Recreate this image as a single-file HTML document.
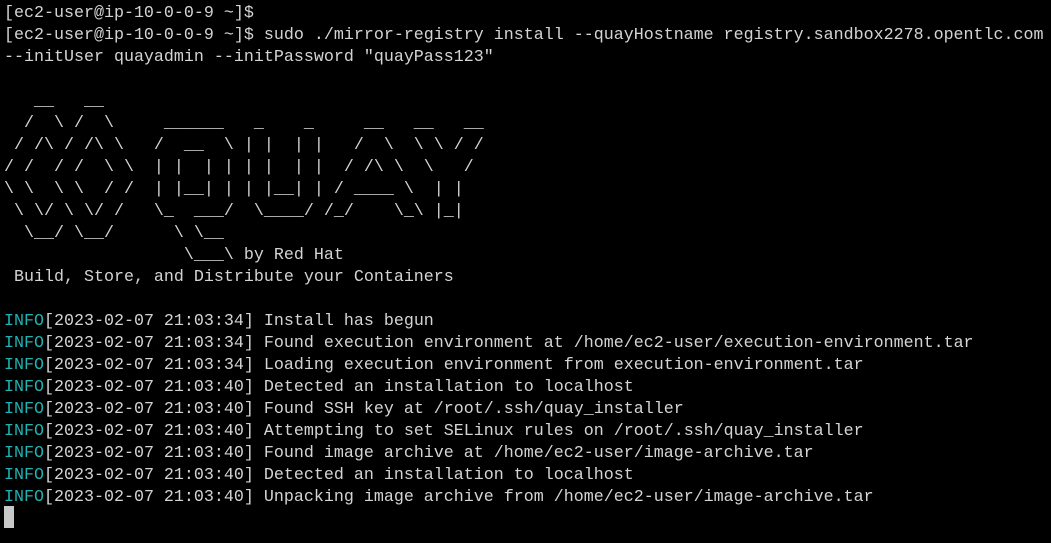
<!DOCTYPE html>
<html><head><meta charset="utf-8"><style>
html,body{margin:0;padding:0;background:#000;width:1051px;height:543px;overflow:hidden}
pre{margin:0;position:absolute;left:4px;top:3px;font-family:"Liberation Mono","DejaVu Sans Mono",monospace;font-size:16.67px;line-height:22px;color:#d4d4d4;white-space:pre}
.i{color:#1fb3b3}
.c{position:absolute;left:4px;top:506px;width:10px;height:22px;background:#c8c8c8}
</style></head><body>
<pre>[ec2-user@ip-10-0-0-9 ~]$
[ec2-user@ip-10-0-0-9 ~]$ sudo ./mirror-registry install --quayHostname registry.sandbox2278.opentlc.com
--initUser quayadmin --initPassword "quayPass123"

   __   __
  /  \ /  \     ______   _    _     __   __   __
 / /\ / /\ \   /  __  \ | |  | |   /  \  \ \ / /
/ /  / /  \ \  | |  | | | |  | |  / /\ \  \   /
\ \  \ \  / /  | |__| | | |__| | / ____ \  | |
 \ \/ \ \/ /   \_  ___/  \____/ /_/    \_\ |_|
  \__/ \__/      \ \__
                  \___\ by Red Hat
 Build, Store, and Distribute your Containers

<span class="i">INFO</span>[2023-02-07 21:03:34] Install has begun
<span class="i">INFO</span>[2023-02-07 21:03:34] Found execution environment at /home/ec2-user/execution-environment.tar
<span class="i">INFO</span>[2023-02-07 21:03:34] Loading execution environment from execution-environment.tar
<span class="i">INFO</span>[2023-02-07 21:03:40] Detected an installation to localhost
<span class="i">INFO</span>[2023-02-07 21:03:40] Found SSH key at /root/.ssh/quay_installer
<span class="i">INFO</span>[2023-02-07 21:03:40] Attempting to set SELinux rules on /root/.ssh/quay_installer
<span class="i">INFO</span>[2023-02-07 21:03:40] Found image archive at /home/ec2-user/image-archive.tar
<span class="i">INFO</span>[2023-02-07 21:03:40] Detected an installation to localhost
<span class="i">INFO</span>[2023-02-07 21:03:40] Unpacking image archive from /home/ec2-user/image-archive.tar</pre>
<div class="c"></div>
</body></html>
